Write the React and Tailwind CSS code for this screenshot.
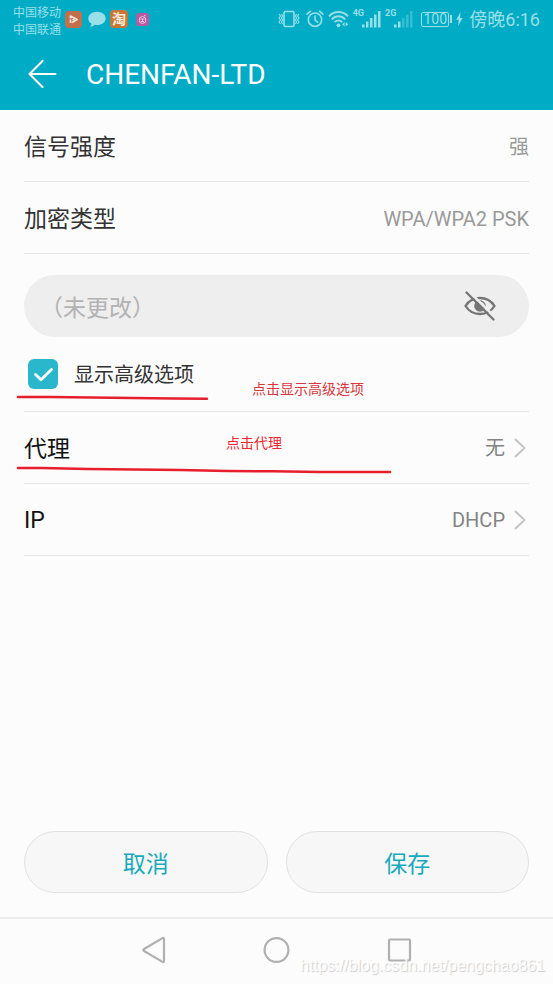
import React from "react";

const FONT = "font-[Roboto,'Noto_Sans_CJK_SC',sans-serif]";
const CJK = "font-['Noto_Sans_CJK_SC',sans-serif] leading-normal";

function VibrateIcon() {
  return (
    <svg width="22" height="18" viewBox="0 0 22 18" fill="none" stroke="currentColor" strokeWidth="1.600">
      <rect x="6" y="1.500" width="10" height="15" rx="1.500" />
      <path d="M1 4l1.500 2L1 8l1.500 2L1 12l1.500 2M3.500 4l1 2-1 2 1 2-1 2 1 2M21 4l-1.500 2L21 8l-1.500 2 1.500 2-1.500 2M18.500 4l-1 2 1 2-1 2 1 2-1 2" strokeWidth="1.100" />
    </svg>
  );
}

function AlarmIcon() {
  return (
    <svg width="18" height="18" viewBox="0 0 18 18" fill="none" stroke="currentColor" strokeWidth="1.600" strokeLinecap="round">
      <circle cx="9" cy="9.700" r="6.700" />
      <path d="M9 6v4l2.500 2.200M1 4.200L4.300 1.300M17 4.200L13.700 1.300" />
    </svg>
  );
}

function WifiIcon() {
  return (
    <svg width="21" height="18" viewBox="0 0 21 18" fill="none" stroke="currentColor" strokeWidth="1.900">
      <path d="M1 6.300C6 .6 15 .6 20 6.300M3.800 9.300C7.500 5.200 13.500 5.200 17.200 9.300M6.600 12.200c2.300-2.400 5.500-2.400 7.800 0" />
      <circle cx="10.500" cy="15.300" r="1.900" fill="currentColor" stroke="none" />
      <path d="M16.500 12v4.500l-2.300-2.200zM17.700 12v4.500l2.500-2.300z" fill="currentColor" stroke="none" />
    </svg>
  );
}

function SignalIcon({ strong }) {
  const faint = strong ? 1 : 0.35;
  return (
    <svg width="19" height="18" viewBox="0 0 19 18" fill="currentColor">
      <rect x="0" y="14.500" width="2.500" height="3" />
      <rect x="4" y="11.500" width="2.500" height="6" />
      <rect x="8" y="8" width="2.500" height="9.500" opacity={faint} />
      <rect x="12" y="4.500" width="2.500" height="13" opacity={faint} />
      <rect x="16" y="1" width="2.500" height="16.500" opacity={faint} />
    </svg>
  );
}

function StatusBar() {
  return (
    <div className="flex h-[38px] items-center justify-between px-[13px] text-[#99dfe8]">
      <div className="flex items-center gap-1">
        <div className="pt-0.5 font-['Noto_Sans_CJK_SC',sans-serif] text-[12px] leading-[17px]">
          <div>中国移动</div>
          <div>中国联通</div>
        </div>
        <svg width="17" height="17" viewBox="0 0 17 17">
          <rect width="17" height="17" rx="4" fill="#c26f4b" />
          <path d="M5.500 12V8.500M5.500 7.500V5l6.500 3.500-5 3M7.500 8.500h2" fill="none" stroke="#f3e5dc" strokeWidth="1.700" strokeLinejoin="round" />
        </svg>
        <svg className="ml-0.5" width="18" height="17" viewBox="0 0 18 17" fill="currentColor">
          <path d="M9 .8c4.800 0 8.700 2.900 8.700 6.600S13.800 14 9 14c-.8 0-1.500-.1-2.200-.2-1.300 1.200-2.900 1.900-4.800 2 .9-.9 1.400-1.900 1.400-3.200C1.400 11.400.3 9.500.3 7.400.3 3.700 4.200.8 9 .8z" />
        </svg>
        <span className="flex size-[18px] items-center justify-center rounded bg-[#c67637] text-[14px] leading-none font-bold text-[#f3eadb]">淘</span>
        <svg className="ml-1" width="13" height="13" viewBox="0 0 13 13">
          <rect width="13" height="13" rx="3" fill="#b75aa0" />
          <g fill="none" stroke="#eacbe2" strokeWidth="1">
            <circle cx="6.500" cy="7" r="3.400" />
            <path d="M4.500 6h4M6.500 6v3M8 3l1.500-.8M5 8.500h3" />
          </g>
        </svg>
      </div>
      <div className="flex items-center">
        <VibrateIcon />
        <span className="ml-1.5"><AlarmIcon /></span>
        <span className="ml-1"><WifiIcon /></span>
        <span className="ml-1 -mr-0.5 self-start text-[9px] leading-[14px] font-bold">4G</span>
        <SignalIcon strong />
        <span className="ml-1 -mr-0.5 self-start text-[9px] leading-[14px] font-bold">2G</span>
        <SignalIcon />
        <span className="ml-2 flex h-[15px] w-[28px] items-center justify-center rounded-[2px] border border-[#99dfe8] text-[14px] leading-none">100</span>
        <span className="ml-px h-2 w-0.5 bg-[#99dfe8]" />
        <svg className="ml-1" width="7" height="14" viewBox="0 0 7 14" fill="currentColor">
          <path d="M4.500 0L.3 7.800h2.500L2 14l4.700-8H4z" />
        </svg>
        <span className="ml-1.5 pt-0.5 text-[18px] leading-6">傍晚6:16</span>
      </div>
    </div>
  );
}

function Chevron() {
  return (
    <svg className="mr-0.5 ml-2" width="14" height="20" viewBox="0 0 14 20" fill="none" stroke="#c4c4c4" strokeWidth="2">
      <path d="M2 1l9.500 9L2 19" />
    </svg>
  );
}

function InfoRow({ label, value }) {
  return (
    <div className="flex h-[72px] items-center justify-between border-b border-[#e6e6e6]">
      <dt className={`text-[23px] text-[#333] ${CJK}`}>{label}</dt>
      <dd className="pt-0.5 text-[20px] text-[#999]">{value}</dd>
    </div>
  );
}

function LinkRow({ label, value, children }) {
  return (
    <div className="relative border-b border-[#e6e6e6]">
      <button type="button" className="flex h-[71px] w-full items-center text-left">
        <span className={`flex-1 text-[23px] text-[#111] ${CJK}`}>{label}</span>
        <span className="text-[20px] text-[#848484]">{value}</span>
        <Chevron />
      </button>
      {children}
    </div>
  );
}

export default function App() {
  return (
    <div className={`relative flex min-h-screen flex-col bg-[#fcfcfc] ${FONT}`}>
      <header className="bg-[#00acc5]">
        <StatusBar />
        <div className="flex h-[72px] items-center gap-[29px] pl-7">
          <button type="button" aria-label="返回">
            <svg width="29" height="28" viewBox="0 0 29 28" fill="none" stroke="white" strokeWidth="2" strokeLinecap="round" strokeLinejoin="round">
              <path d="M27.500 14H1.500M14.500 1L1.500 14l13 13" />
            </svg>
          </button>
          <h1 className="pt-0.5 text-[28px] text-white">CHENFAN-LTD</h1>
        </div>
      </header>

      <main className="flex flex-1 flex-col px-6">
        <dl>
          <InfoRow label="信号强度" value="强" />
          <InfoRow label="加密类型" value="WPA/WPA2 PSK" />
        </dl>

        <div className="mt-[21px] flex h-[62px] items-center rounded-full bg-[#eee] pr-8 pl-4">
          <input
            type="password"
            aria-label="密码"
            placeholder="（未更改）"
            className={`min-w-0 flex-1 bg-transparent text-[23px] text-[#333] outline-none placeholder:text-[#b2b2b2] ${CJK}`}
          />
          <button type="button" aria-label="显示密码">
            <svg width="34" height="30" viewBox="0 0 34 30" fill="none">
              <path d="M2.500 15C6 9.500 11 7 17 7s11 2.500 14.500 8C28 20.500 23 23 17 23S6 20.500 2.500 15z" stroke="#757575" strokeWidth="2.300" />
              <circle cx="17" cy="15" r="5.800" fill="#757575" />
              <path d="M17 11.500a4 4 0 0 1 4 3" stroke="#eee" strokeWidth="1.200" />
              <path d="M5.500 0L33 27" stroke="#eee" strokeWidth="2.500" />
              <path d="M3.500 1.500L30.500 28.500" stroke="#757575" strokeWidth="2.300" strokeLinecap="round" />
            </svg>
          </button>
        </div>

        <div className="relative flex h-[75px] items-center border-b border-[#e6e6e6] pl-1">
          <label className={`flex items-center gap-4 text-[20px] text-[#333] ${CJK}`}>
            <span className="grid">
              <input type="checkbox" defaultChecked className="peer col-start-1 row-start-1 size-[30px] appearance-none rounded-md bg-[#2ab7cb]" />
              <svg className="pointer-events-none col-start-1 row-start-1" width="30" height="30" viewBox="0 0 30 30" fill="none" stroke="white" strokeWidth="2.800" strokeLinecap="round" strokeLinejoin="round">
                <path d="M7.500 15.500l5.500 5.200L23.500 10.500" />
              </svg>
            </span>
            显示高级选项
          </label>
          <span className="absolute top-[42px] left-[228px] text-[14px] leading-5 text-[#d9363e]">点击显示高级选项</span>
          <svg className="absolute top-[57px] -left-2" width="194" height="8" viewBox="0 0 194 8" fill="none" stroke="#e71f2c" strokeWidth="2.500" strokeLinecap="round">
            <path d="M2 3H34L96 3.700L158 4.500L191 4.700" />
          </svg>
        </div>

        <LinkRow label="代理" value="无">
          <span className="pointer-events-none absolute top-[21px] left-[202px] text-[14px] leading-5 text-[#ea2730]">点击代理</span>
          <svg className="pointer-events-none absolute top-[53px] -left-2" width="377" height="10" viewBox="0 0 377 10" fill="none" stroke="#e71f2c" strokeWidth="2.500" strokeLinecap="round">
            <path d="M2 3H26L72 4L118 4.500L165 5L211 6L257 6.300L304 7H374" />
          </svg>
        </LinkRow>
        <LinkRow label={<span className="font-[Roboto,sans-serif]">IP</span>} value="DHCP" />

        <div className="mt-auto flex gap-[18px] pb-6">
          <button type="button" className={`h-[62px] flex-1 rounded-full border border-[#e2e2e2] bg-[#f7f7f7] text-[23px] text-[#17a9bd] ${CJK}`}>取消</button>
          <button type="button" className={`h-[62px] flex-1 rounded-full border border-[#e2e2e2] bg-[#f7f7f7] text-[23px] text-[#17a9bd] ${CJK}`}>保存</button>
        </div>
      </main>

      <nav className="flex h-[67px] items-center justify-center gap-[96px] border-t-2 border-[#ebebeb] pb-1 text-[#b0b0b0]">
        <button type="button" aria-label="后退">
          <svg width="27" height="28" viewBox="0 0 27 28" fill="none" stroke="currentColor" strokeWidth="2.200" strokeLinejoin="round">
            <path d="M24 3v22c0 1-.8 1.300-1.500.9L4 15c-.9-.5-.9-1.400 0-2L22.500 2.100c.7-.4 1.500-.1 1.500.9z" />
          </svg>
        </button>
        <button type="button" aria-label="主页">
          <svg width="27" height="28" viewBox="0 0 27 28" fill="none" stroke="currentColor" strokeWidth="2.200">
            <circle cx="13.500" cy="14" r="11.900" />
          </svg>
        </button>
        <button type="button" aria-label="最近任务">
          <svg width="27" height="28" viewBox="0 0 27 28" fill="none" stroke="currentColor" strokeWidth="2.200">
            <rect x="3" y="3.500" width="21" height="21" rx="1" />
          </svg>
        </button>
      </nav>
      <span className="pointer-events-none absolute right-2 bottom-2 font-['Liberation_Sans',sans-serif] text-[16px] leading-5 text-white/90 [text-shadow:1px_1px_1px_#ccc]">
        https://blog.csdn.net/pengchao861
      </span>
    </div>
  );
}
